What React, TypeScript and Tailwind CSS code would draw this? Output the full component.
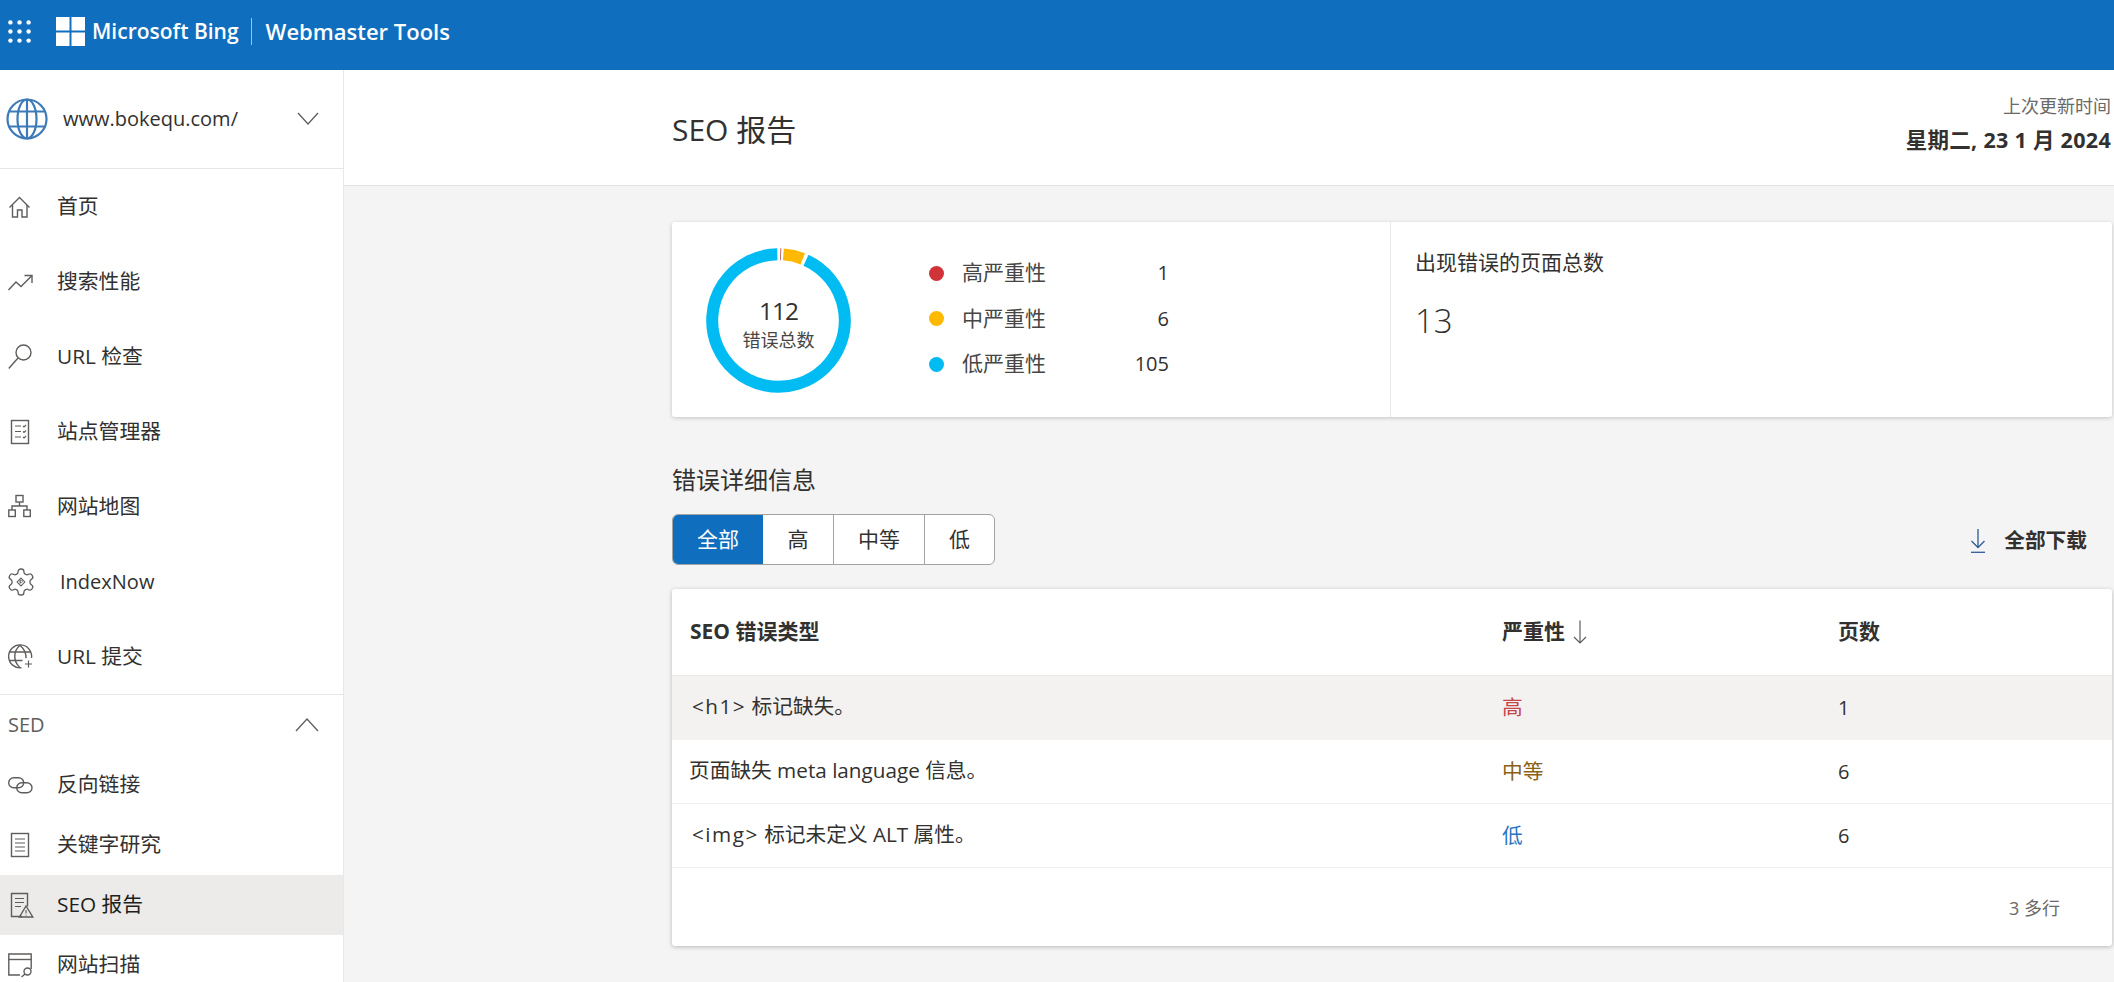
import React from "react";

const S = { fill: "none", stroke: "#5f5d5b", strokeWidth: 1.4 };

function Ico({ children }: { children: React.ReactNode }) {
  return (
    <svg width="26" height="26" viewBox="0 0 26 26" className="shrink-0 overflow-visible" {...S}>
      {children}
    </svg>
  );
}

const Home = () => (
  <Ico>
    <path d="M1.5 13.5 11.5 3.5l10 10" />
    <path d="M4.5 11v12h5v-7h4.5v7h5V11" />
  </Ico>
);
const Trend = () => (
  <Ico>
    <path d="M0.5 21 8 13l5 4.5L24 6.5" />
    <path d="M16.5 6.5H24V14" />
  </Ico>
);
const SearchI = () => (
  <Ico>
    <circle cx="15.5" cy="8.5" r="7.5" />
    <path d="M10 14 .8 24.5" />
  </Ico>
);
const Checklist = () => (
  <Ico>
    <rect x="3.5" y="1.5" width="17" height="23" />
    <path d="M7 7h6M7 12.5h6M7 18h6M15 7l1 1 2-2M15 12.5l1 1 2-2M15 18l1 1 2-2" strokeWidth="1.1" />
  </Ico>
);
const Sitemap = () => (
  <Ico>
    <rect x="8" y="1.5" width="7" height="6.5" />
    <rect x=".8" y="16" width="6.5" height="6.5" />
    <rect x="15.8" y="16" width="6.5" height="6.5" />
    <path d="M11.5 8v4M4 16v-4h15v4" />
  </Ico>
);
const Gear = () => (
  <Ico>
    <g transform="translate(-2.6 -2.6) scale(1.3)" strokeWidth="1">
      <path d="M12.22 2h-.44a2 2 0 0 0-2 2v.18a2 2 0 0 1-1 1.73l-.43.25a2 2 0 0 1-2 0l-.15-.08a2 2 0 0 0-2.73.73l-.22.38a2 2 0 0 0 .73 2.73l.15.1a2 2 0 0 1 1 1.72v.51a2 2 0 0 1-1 1.74l-.15.09a2 2 0 0 0-.73 2.73l.22.38a2 2 0 0 0 2.73.73l.15-.08a2 2 0 0 1 2 0l.43.25a2 2 0 0 1 1 1.73V20a2 2 0 0 0 2 2h.44a2 2 0 0 0 2-2v-.18a2 2 0 0 1 1-1.73l.43-.25a2 2 0 0 1 2 0l.15.08a2 2 0 0 0 2.73-.73l.22-.39a2 2 0 0 0-.73-2.73l-.15-.08a2 2 0 0 1-1-1.74v-.5a2 2 0 0 1 1-1.74l.15-.09a2 2 0 0 0 .73-2.73l-.22-.38a2 2 0 0 0-2.73-.73l-.15.08a2 2 0 0 1-2 0l-.43-.25a2 2 0 0 1-1-1.73V4a2 2 0 0 0-2-2z" />
      <path d="M12 9 15 12 12 15 9 12z" strokeWidth=".8" />
      <path d="M11.3 10.6h1a.9.9 0 0 1 0 1.8h-1zM11.3 10.6v3" strokeWidth=".6" />
    </g>
  </Ico>
);
const GlobeSmall = () => (
  <Ico>
    <path d="M13.5 23.8A11.5 11.5 0 1 1 23.5 14" />
    <path d="M12 1.2c-7 6-7 16 0 22.4M12 1.2c5 4.5 6.2 9 6 13" />
    <path d="M1.5 8h21M1.5 16.5h13" />
    <path d="M17 20h7M20.5 16.5v7" strokeWidth="1.2" />
  </Ico>
);
const LinkI = () => (
  <Ico>
    <rect x=".7" y="5.7" width="15" height="10" rx="5" />
    <rect x="8.7" y="10.7" width="15.3" height="10" rx="5" />
  </Ico>
);
const Doc = () => (
  <Ico>
    <rect x="3.5" y="1.5" width="17" height="23" />
    <path d="M7 7h10M7 11h10M7 15h10M7 19h10" strokeWidth="1.1" />
  </Ico>
);
const SeoI = () => (
  <Ico>
    <path d="M14 24.5H3.5v-23h16v13" />
    <path d="M7 6.5h9M7 10.5h9M7 14.5h6" strokeWidth="1.1" />
    <path d="M18 14 24.8 25H11.5z" />
    <path d="M18 18v3.5M18 22.8v.8" strokeWidth="1.1" />
  </Ico>
);
const Scan = () => (
  <Ico>
    <path d="M12 23H.8V2h22.400v15" />
    <path d="M.8 7.5h22.400" />
    <circle cx="19.5" cy="19.5" r="3.5" />
    <path d="M17 22l-3.5 3" />
  </Ico>
);

function Chevron({ up }: { up?: boolean }) {
  return (
    <svg width="24" height="14" viewBox="0 0 24 14" fill="none" stroke="#605e5c" strokeWidth="1.3" className="block">
      {up ? <path d="M1 13 12 1l11 12" /> : <path d="M2 1l10 11L22 1" />}
    </svg>
  );
}

function NavRow({ icon, label, h, active, tx }: { icon: React.ReactNode; label: string; h: string; active?: boolean; tx?: string }) {
  return (
    <div className={`flex items-center pl-2 ${h} ${active ? "bg-[#edebe9] text-[#201f1e]" : "text-[#323130]"}`}>
      {icon}
      <span className={tx ?? "ml-[23px] text-[20.8px]"}>{label}</span>
    </div>
  );
}

function Sidebar() {
  return (
    <aside className="w-[344px] shrink-0 border-r border-[#e8e8e8] bg-white overflow-hidden">
      <div className="h-[99px] border-b border-[#e6e6e6] flex items-center pl-1.5 pr-[23px]">
        <svg width="42" height="42" viewBox="0 0 42 42" fill="none" stroke="#3d7ab8" strokeWidth="2.2" className="shrink-0">
          <circle cx="21" cy="21" r="19.5" />
          <ellipse cx="21" cy="21" rx="9.5" ry="19.5" />
          <path d="M3.5 13.5h35M3.5 28.5h35M21 1.5v39" />
        </svg>
        <span className="ml-[15px] text-[20px] text-[#323130]">www.bokequ.com/</span>
        <span className="ml-auto"><Chevron /></span>
      </div>
      <NavRow icon={<Home />} label="首页" h="h-[75px]" />
      <NavRow icon={<Trend />} label="搜索性能" h="h-[75px]" />
      <NavRow icon={<SearchI />} label="URL 检查" h="h-[75px]" />
      <NavRow icon={<Checklist />} label="站点管理器" h="h-[75px]" />
      <NavRow icon={<Sitemap />} label="网站地图" h="h-[75px]" />
      <NavRow icon={<Gear />} label="IndexNow" h="h-[75px]" tx="ml-[26px] text-[20px]" />
      <NavRow icon={<GlobeSmall />} label="URL 提交" h="h-[75px]" />
      <div className="h-[61px] border-t border-[#e6e6e6] flex items-center pl-2 pr-[24px] text-[20px] text-[#605e5c]">
        <span>SED</span>
        <span className="ml-auto"><Chevron up /></span>
      </div>
      <NavRow icon={<LinkI />} label="反向链接" h="h-[60px]" />
      <NavRow icon={<Doc />} label="关键字研究" h="h-[60px]" />
      <NavRow icon={<SeoI />} label="SEO 报告" h="h-[60px]" active />
      <NavRow icon={<Scan />} label="网站扫描" h="h-[60px]" />
    </aside>
  );
}

function polar(a: number, r: number) {
  const t = ((a - 90) * Math.PI) / 180;
  return `${72.5 + r * Math.cos(t)} ${72.5 + r * Math.sin(t)}`;
}
function Arc({ from, to, color, w = 12 }: { from: number; to: number; color: string; w?: number }) {
  const large = to - from > 180 ? 1 : 0;
  return (
    <path
      d={`M${polar(from, 66.3)} A66.3 66.3 0 ${large} 1 ${polar(to, 66.3)}`}
      fill="none"
      stroke={color}
      strokeWidth={w}
    />
  );
}

function Donut() {
  return (
    <div className="relative w-[145px] h-[145px] shrink-0 mt-[1px]">
      <svg width="145" height="145" viewBox="0 0 145 145">
        <Arc from={24.5} to={359} color="#00bcf2" />
        <Arc from={1.6} to={2.2} color="#a4262c" />
        <Arc from={4.2} to={21.5} color="#ffb900" />
      </svg>
      <div className="absolute inset-0 flex flex-col items-center justify-center pt-[8px]">
        <span className="text-[24.5px] leading-[30px] tracking-[-1px] text-[#323130]">112</span>
        <span className="mt-[1px] text-[18px] leading-[26px] text-[#484644]">错误总数</span>
      </div>
    </div>
  );
}

function Legend({ color, label, n }: { color: string; label: string; n: string }) {
  return (
    <div className="flex items-center h-[45.5px]">
      <span className={`w-[15px] h-[15px] rounded-full ${color}`} />
      <span className="ml-[18px] text-[21px] text-[#484644]">{label}</span>
      <span className="ml-auto text-[20px] text-[#323130]">{n}</span>
    </div>
  );
}

function Row({ name, sev, sevColor, n, hl, h }: { name: React.ReactNode; sev: string; sevColor: string; n: string; hl?: boolean; h: string }) {
  return (
    <div className={`flex items-center text-[#323130] ${h} ${hl ? "bg-[#f3f2f1]" : "border-b border-[#f0f0f0]"}`}>
      <div className="w-[830px] pl-[17px] pb-[2px] text-[20.7px]">{name}</div>
      <div className={`w-[336px] text-[20.7px] ${sevColor}`}>{sev}</div>
      <div className="text-[20px]">{n}</div>
    </div>
  );
}

function Tag({ children }: { children: string }) {
  return <span className="ml-[3px] tracking-[1.5px]">{children}</span>;
}

function Main() {
  return (
    <main className="flex-1 min-w-0 bg-[#f4f4f4]">
      <div className="h-[116px] bg-white border-b border-[#e2e2e2] pl-[328px] pr-[3px] flex items-center justify-between">
        <h1 className="pt-[3px] text-[30px] text-[#323130]">SEO 报告</h1>
        <div className="text-right -mt-[10px]">
          <div className="text-[18px] leading-[26px] text-[#6b6967]">上次更新时间</div>
          <div className="mt-[8px] text-[21.5px] leading-[26px] font-bold tracking-[0.3px] text-[#323130]">星期二, 23 1 月 2024</div>
        </div>
      </div>
      <div className="pl-[328px] pr-[2px] pt-[36px]">
        <section className="h-[195px] bg-white rounded-[3px] shadow-[0_1px_4px_rgba(0,0,0,0.2)] flex">
          <div className="w-[719px] border-r border-[#e6e6e6] pl-[34px] pr-[221px] flex items-center">
            <Donut />
            <div className="ml-[78px] flex-1 -mt-[2px]">
              <Legend color="bg-[#d13438]" label="高严重性" n="1" />
              <Legend color="bg-[#ffb900]" label="中严重性" n="6" />
              <Legend color="bg-[#00bcf2]" label="低严重性" n="105" />
            </div>
          </div>
          <div className="pl-[24px] pt-[25px]">
            <div className="text-[21px] leading-[30px] text-[#323130]">出现错误的页面总数</div>
            <div className="mt-[22px] text-[33px] leading-[44px] font-light text-[#323130]">13</div>
          </div>
        </section>

        <h2 className="mt-[47px] text-[24px] leading-[32px] text-[#323130]">错误详细信息</h2>
        <div className="mt-[18px] flex items-center justify-between pr-[25px]">
          <div className="flex h-[51px] border border-[#a3a3a3] rounded-[6px] overflow-hidden bg-white text-[21px] text-[#323130]">
            <div className="w-[90px] bg-[#106ebe] text-white flex items-center justify-center">全部</div>
            <div className="w-[71px] border-r border-[#a3a3a3] flex items-center justify-center">高</div>
            <div className="w-[91px] border-r border-[#a3a3a3] flex items-center justify-center">中等</div>
            <div className="w-[69px] flex items-center justify-center">低</div>
          </div>
          <div className="flex items-center gap-[18px] pt-[3px]">
            <svg width="16" height="24" viewBox="0 0 16 24" fill="none" stroke="#2f5c99" strokeWidth="1.3">
              <path d="M8 0v18M1.5 12 8 18.5 14.5 12" />
              <path d="M1 23.3h14" />
            </svg>
            <span className="text-[20.7px] font-bold text-[#323130]">全部下载</span>
          </div>
        </div>

        <section className="mt-[24px] h-[357px] bg-white rounded-[3px] shadow-[0_1px_4px_rgba(0,0,0,0.25)] overflow-hidden">
          <div className="h-[87px] flex items-center border-b border-[#eaeaea] font-bold text-[21px] text-[#323130]">
            <div className="w-[830px] pl-[18px]">SEO 错误类型</div>
            <div className="w-[336px] flex items-center gap-[8px]">
              严重性
              <svg width="14" height="24" viewBox="0 0 14 24" fill="none" stroke="#605e5c" strokeWidth="1.2">
                <path d="M7 .5v22.5M1 17l6 6 6-6" />
              </svg>
            </div>
            <div>页数</div>
          </div>
          <Row name={<><Tag>{"<h1>"}</Tag> 标记缺失。</>} sev="高" sevColor="text-[#c5444a]" n="1" hl h="h-[64px]" />
          <Row name="页面缺失 meta language 信息。" sev="中等" sevColor="text-[#8a6116]" n="6" h="h-[64px]" />
          <Row name={<><Tag>{"<img>"}</Tag> 标记未定义 ALT 属性。</>} sev="低" sevColor="text-[#2b73c2]" n="6" h="h-[64px]" />
          <div className="flex justify-end pr-[52px] pt-[27px] text-[18px] leading-[26px] text-[#6b6967]">3 多行</div>
        </section>
      </div>
    </main>
  );
}

export default function App() {
  return (
    <div className="w-[2114px] h-[982px] overflow-hidden flex flex-col bg-white [font-family:'Open_Sans','Noto_Sans_CJK_SC',sans-serif]">
      <header className="h-[70px] shrink-0 pb-[8px] bg-[#106ebe] flex items-center text-white">
        <svg width="23" height="23" viewBox="0 0 24 24" fill="#fff" className="ml-2 shrink-0">
          {[2.5, 12, 21.5].flatMap((y) =>
            [2.5, 12, 21.5].map((x) => <circle key={`${x}-${y}`} cx={x} cy={y} r="2.3" />)
          )}
        </svg>
        <svg width="29" height="29" viewBox="0 0 29 29" fill="#fff" className="ml-[25px] shrink-0">
          <rect width="13.5" height="13.5" />
          <rect x="15.5" width="13.5" height="13.5" />
          <rect y="15.5" width="13.5" height="13.5" />
          <rect x="15.5" y="15.5" width="13.5" height="13.5" />
        </svg>
        <span className="ml-[7px] pt-[2px] text-[21px] font-semibold whitespace-nowrap">Microsoft Bing</span>
        <span className="ml-[12px] w-px h-[27px] bg-[#9cc3e6]" />
        <span className="ml-[14px] text-[22px] font-semibold whitespace-nowrap">Webmaster Tools</span>
      </header>
      <div className="flex flex-1 min-h-0">
        <Sidebar />
        <Main />
      </div>
    </div>
  );
}
